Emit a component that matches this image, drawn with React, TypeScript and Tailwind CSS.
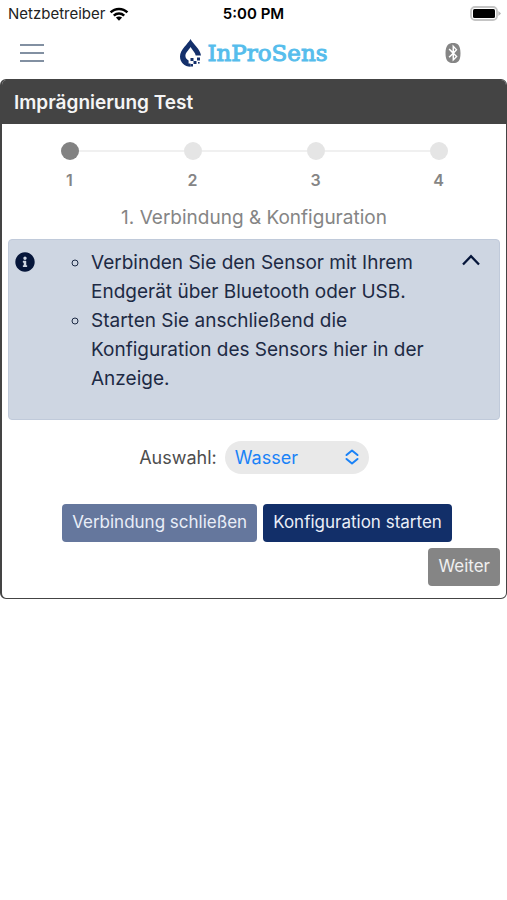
import { useState } from "react";
import { FaBluetooth, FaInfoCircle } from "react-icons/fa";

const steps = [1, 2, 3, 4];

function WifiIcon() {
  return (
    <svg viewBox="0 0 20 14" className="h-[14px] w-5" aria-hidden="true">
      <g fill="none" stroke="#000" strokeWidth="2.5">
        <path d="M1.6 5.4 C6.2 0.7 13.8 0.7 18.4 5.4" />
        <path d="M4.8 8.6 C7.8 5.8 12.2 5.8 15.2 8.6" />
      </g>
      <path d="M6.9 10.5 C8.7 9 11.3 9 13.1 10.5 L10 13.7 Z" fill="#000" />
    </svg>
  );
}

function BatteryIcon() {
  return (
    <svg viewBox="0 0 32 16" className="h-4 w-8" aria-hidden="true">
      <rect x="2" y="1" width="26" height="13" rx="4" fill="#fff" stroke="#c4c4c4" strokeWidth="1.8" />
      <rect x="4" y="3" width="22" height="9" rx="1.5" fill="#000" />
      <path d="M29.4 5 L32 7.5 L29.4 10 Z" fill="#b5b5b5" />
    </svg>
  );
}

function DropLogo() {
  return (
    <svg viewBox="0 0 24 30" className="h-[30px] w-6" aria-hidden="true">
      <path
        fill="#14306b"
        fillRule="evenodd"
        d="M11.5 1 C9 6 1 11.5 1 18.5 C1 24.5 5.5 28.6 11.5 28.8 L11.5 25.6 L9.6 25.6 L9.6 22.4 C7.6 21.5 6.4 20 6.4 17.8 C6.4 14.6 9.6 12.3 11.5 9 C13.4 12.3 16.4 14.6 16.7 17.6 L22 17.6 C21.4 11 14 6 11.5 1 Z"
      />
      <g fill="#14306b">
        <rect x="11.5" y="20" width="3" height="3" />
        <rect x="14.5" y="23" width="3" height="3" />
        <rect x="18" y="19.5" width="3" height="3" />
        <rect x="11.5" y="26" width="2.5" height="2.5" />
        <rect x="19" y="24" width="1.6" height="1.6" />
      </g>
    </svg>
  );
}

function StatusBar() {
  return (
    <div className="grid h-7 grid-cols-3 items-center px-2 text-[15px] text-black">
      <div className="flex items-center gap-1 text-[#222]">
        <span>Netzbetreiber</span>
        <WifiIcon />
      </div>
      <span className="text-center font-semibold">5:00 PM</span>
      <div className="-mr-0.5 flex justify-end">
        <BatteryIcon />
      </div>
    </div>
  );
}

function Header() {
  return (
    <header className="grid h-[51px] grid-cols-[1fr_auto_1fr] items-center px-5 pb-0.5">
      <button type="button" aria-label="Menu" className="flex w-6 flex-col gap-1.5">
        <span className="h-0.5 w-full bg-[#8290a2]" />
        <span className="h-0.5 w-full bg-[#8290a2]" />
        <span className="h-0.5 w-full bg-[#8290a2]" />
      </button>
      <a href="#" className="flex items-center justify-center gap-1">
        <DropLogo />
        <span className="font-['DejaVu_Serif',serif] text-[23px]/7 text-[#56bdec] [-webkit-text-stroke:1px_#56bdec]">
          InProSens
        </span>
      </a>
      <button type="button" aria-label="Bluetooth" className="justify-self-end pr-6 text-[#858585]">
        <FaBluetooth size={20} />
      </button>
    </header>
  );
}

function Stepper() {
  return (
    <ol className="grid grid-cols-4">
      {steps.map((step) => (
        <li key={step} className="flex flex-col items-center gap-2 text-base font-semibold text-[#858585]">
          <div className="flex w-full items-center">
            <span className={step === 1 ? "h-0.5 flex-1" : "h-0.5 flex-1 bg-[#f0f0f0]"} />
            <span className={step === 1 ? "size-[18px] rounded-full bg-[#828282]" : "size-[18px] rounded-full bg-[#e5e5e5]"} />
            <span className={step === 4 ? "h-0.5 flex-1" : "h-0.5 flex-1 bg-[#f0f0f0]"} />
          </div>
          <span>{step}</span>
        </li>
      ))}
    </ol>
  );
}

function InfoPanel() {
  const [open, setOpen] = useState(true);
  return (
    <section className="flex items-start rounded-sm border border-[#c0cada] bg-[#ced6e2] px-1.5 pt-2 pb-[26px] text-[#1d2a44]">
      <FaInfoCircle size={20} className="mt-1 shrink-0 text-[#06163a]" />
      <div className="min-w-0 flex-1 pl-14">
        {open && (
          <ul className="list-[circle] text-[19px]/[29px]">
            <li>
              Verbinden Sie den Sensor mit Ihrem
              <br />
              Endgerät über Bluetooth oder USB.
            </li>
            <li>
              Starten Sie anschließend die
              <br />
              Konfiguration des Sensors hier in der
              <br />
              Anzeige.
            </li>
          </ul>
        )}
      </div>
      <button
        type="button"
        aria-label="Info"
        aria-expanded={open}
        onClick={() => setOpen(!open)}
        className="mt-1.5 mr-3"
      >
        <svg viewBox="0 0 20 12" className="h-3 w-5" aria-hidden="true">
          <path d="M2 10.5 L10 2.2 L18 10.5" fill="none" stroke="#06163a" strokeWidth="2.3" />
        </svg>
      </button>
    </section>
  );
}

export default function App() {
  return (
    <div className="bg-white font-['Inter','Liberation_Sans',sans-serif]">
      <StatusBar />
      <Header />
      <main className="overflow-hidden rounded-md border border-l-2 border-[#444]">
        <h1 className="bg-[#444] px-3 pt-[9px] pb-[7px] text-[19px]/7 font-semibold text-[#f5f5f5]">
          Imprägnierung Test
        </h1>
        <div className="px-1.5 pt-[18px] pb-3">
          <Stepper />
          <h2 className="mt-3 mb-[7px] text-center text-[19px]/7 text-[#858585]">1. Verbindung &amp; Konfiguration</h2>
          <InfoPanel />
          <div className="mt-[21px] flex items-center justify-center gap-2 text-lg text-[#4d4d4d]">
            <label htmlFor="auswahl">Auswahl:</label>
            <div className="relative">
              <select
                id="auswahl"
                className="block h-[33px] w-36 appearance-none rounded-full bg-[#e9e9e9] px-2.5 text-lg/8 text-[#1a82f7]"
              >
                <option>Wasser</option>
              </select>
              <svg viewBox="0 0 14 16" className="pointer-events-none absolute top-2 right-2.5 h-4 w-3.5" aria-hidden="true">
                <path
                  d="M1.5 6 L7 1.5 L12.5 6 M1.5 10 L7 14.5 L12.5 10"
                  fill="none"
                  stroke="#1a82f7"
                  strokeWidth="2"
                  strokeLinecap="round"
                  strokeLinejoin="round"
                />
              </svg>
            </div>
          </div>
          <div className="mt-[30px] flex justify-center gap-1.5 pl-1.5 text-[17px] text-[#e9eef8]">
            <button type="button" className="h-[38px] rounded-sm bg-[#65779d] px-2.5">
              Verbindung schließen
            </button>
            <button type="button" className="h-[38px] rounded-sm bg-[#122f69] px-2.5">
              Konfiguration starten
            </button>
          </div>
          <div className="mt-1.5 flex justify-end">
            <button type="button" className="h-[38px] rounded-sm bg-[#858585] px-2.5 text-[17px] text-[#f0f0f0]">
              Weiter
            </button>
          </div>
        </div>
      </main>
    </div>
  );
}
